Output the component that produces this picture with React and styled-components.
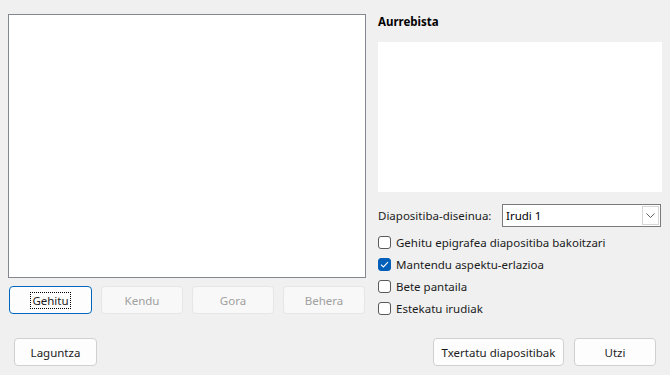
import React from "react";
import styled, { createGlobalStyle, css } from "styled-components";

const Global = createGlobalStyle`
  html, body { margin: 0; padding: 0; background: #f0f0f0; }
  body { font-family: "Segoe UI", "Noto Sans", sans-serif; font-size: 11.5px; color: #000; }
  * { box-sizing: border-box; }
`;

const Page = styled.div`
  width: 670px;
  height: 375px;
  background: #f0f0f0;
  padding: 14px 8px 0 8px;
  display: flex;
  flex-direction: column;
`;

const Main = styled.div`
  display: flex;
  gap: 12px;
`;

const LeftCol = styled.div`
  width: 358px;
  flex: none;
  display: flex;
  flex-direction: column;
`;

const ListBox = styled.div`
  height: 264px;
  background: #fff;
  border: 1px solid #828790;
`;

const ButtonRow = styled.div`
  display: flex;
  gap: 9px;
  margin-top: 8px;
  padding-left: 1px;
`;

const Button = styled.button`
  font-family: inherit;
  font-size: 11.5px;
  height: 28px;
  width: ${(p) => p.$w || 82}px;
  flex: none;
  border-radius: 4px;
  border: 1px solid #d0d0d0;
  background: #fdfdfd;
  color: #1b1b1b;
  display: flex;
  align-items: center;
  justify-content: center;
  padding: 0;
  ${(p) =>
    p.disabled &&
    css`
      background: #f8f8f8;
      border-color: #e6e6e6;
      color: #a0a0a0;
    `}
  ${(p) =>
    p.$focused &&
    css`
      border-color: #0067c0;
    `}
`;

const FocusText = styled.span`
  outline: 1px dotted #000;
  padding: 0 1px;
  line-height: 15px;
`;

const RightCol = styled.div`
  width: 284px;
  flex: none;
  display: flex;
  flex-direction: column;
`;

const Title = styled.div`
  font-weight: bold;
  line-height: 16px;
  height: 16px;
`;

const Preview = styled.div`
  margin-top: 12px;
  height: 150px;
  background: #fff;
`;

const ComboRow = styled.div`
  margin-top: 12px;
  display: flex;
  align-items: center;
  height: 23px;
`;

const Label = styled.div`
  width: 124px;
  color: #1b1b1b;
`;

const Combo = styled.div`
  flex: 1;
  height: 23px;
  border: 1px solid #7a7a7a;
  background: #fff;
  display: flex;
  align-items: center;
  padding-left: 3px;
  margin-right: 1px;
`;

const ComboText = styled.span`
  flex: 1;
`;

const DropBtn = styled.div`
  width: 17px;
  height: 19px;
  margin-right: 1px;
  border: 1px solid #d6d6d6;
  background: #fff;
  display: flex;
  align-items: center;
  justify-content: center;
`;

const Checks = styled.div`
  margin-top: 4px;
  display: flex;
  flex-direction: column;
`;

const CheckRow = styled.label`
  height: 22px;
  display: flex;
  align-items: center;
  gap: 5px;
  color: #1b1b1b;
`;

const Box = styled.span`
  width: 13px;
  height: 13px;
  border-radius: 3px;
  border: 1px solid ${(p) => (p.$checked ? "#005fb8" : "#5a5a5a")};
  background: ${(p) => (p.$checked ? "#005fb8" : "#fff")};
  display: flex;
  align-items: center;
  justify-content: center;
`;

const Footer = styled.div`
  margin-top: 19px;
  display: flex;
  align-items: center;
  padding: 0 6px 0 6px;
  gap: 10px;
`;

const Spacer = styled.div`
  flex: 1;
`;

function Check({ checked, children }) {
  return (
    <CheckRow>
      <Box $checked={checked}>
        {checked && (
          <svg width="9" height="7" viewBox="0 0 9 7">
            <path d="M1 3.6 L3.4 6 L8 1.2" fill="none" stroke="#fff" strokeWidth="1.1" />
          </svg>
        )}
      </Box>
      {children}
    </CheckRow>
  );
}

export default function App() {
  return (
    <>
      <Global />
      <Page>
        <Main>
          <LeftCol>
            <ListBox />
            <ButtonRow>
              <Button $w={83} $focused>
                <FocusText>Gehitu</FocusText>
              </Button>
              <Button disabled>Kendu</Button>
              <Button disabled>Gora</Button>
              <Button disabled>Behera</Button>
            </ButtonRow>
          </LeftCol>
          <RightCol>
            <Title>Aurrebista</Title>
            <Preview />
            <ComboRow>
              <Label>Diapositiba-diseinua:</Label>
              <Combo>
                <ComboText>Irudi 1</ComboText>
                <DropBtn>
                  <svg width="9" height="5" viewBox="0 0 9 5">
                    <path d="M0.5 0.5 L4.5 4.5 L8.5 0.5" fill="none" stroke="#606060" strokeWidth="1" />
                  </svg>
                </DropBtn>
              </Combo>
            </ComboRow>
            <Checks>
              <Check>Gehitu epigrafea diapositiba bakoitzari</Check>
              <Check checked>Mantendu aspektu-erlazioa</Check>
              <Check>Bete pantaila</Check>
              <Check>Estekatu irudiak</Check>
            </Checks>
          </RightCol>
        </Main>
        <Footer>
          <Button $w={83}>Laguntza</Button>
          <Spacer />
          <Button $w={131}>Txertatu diapositibak</Button>
          <Button $w={82}>Utzi</Button>
        </Footer>
      </Page>
    </>
  );
}
